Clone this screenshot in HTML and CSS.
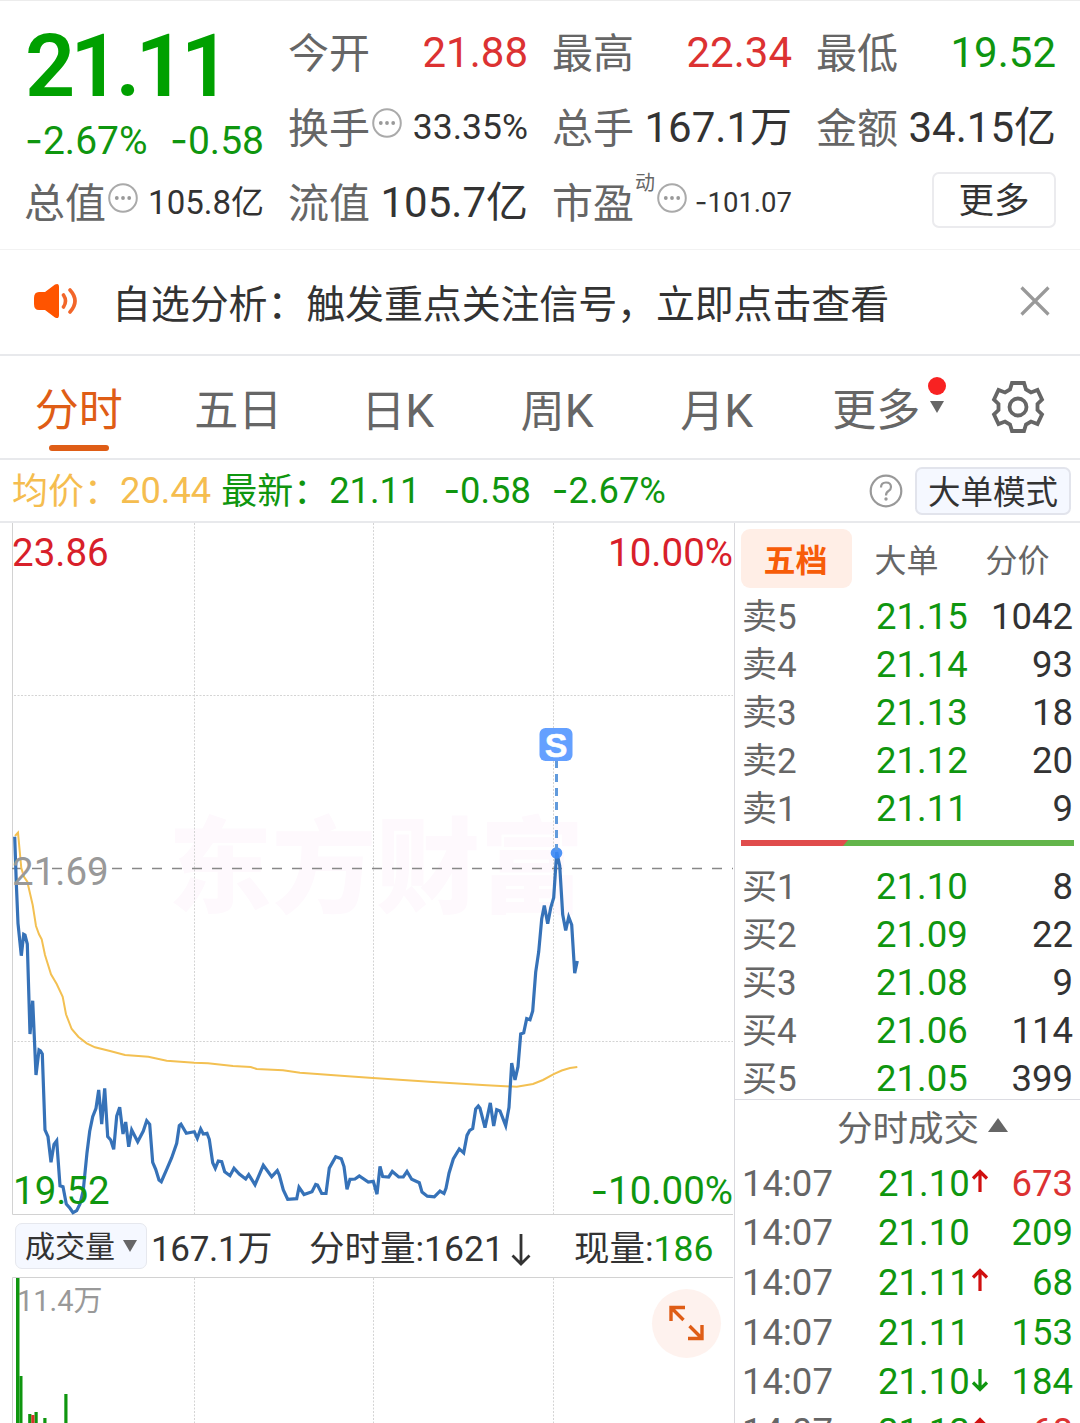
FILE: index.html
```html
<!DOCTYPE html>
<html lang="zh-CN">
  <head>
    <meta charset="UTF-8" />
    <meta name="viewport" content="width=device-width, initial-scale=1.0" />
    <title>分时</title>
    <link rel="stylesheet" href="styles.css">
  </head>

  <body>
    <svg class="defs">
      <symbol id="icon_more" viewBox="0 0 30 30">
        <circle cx="15" cy="15" r="13.8" fill="none" stroke="#aaa" stroke-width="2" />
        <circle cx="8.8" cy="15" r="1.9" fill="#999" />
        <circle cx="15" cy="15" r="1.9" fill="#999" />
        <circle cx="21.2" cy="15" r="1.9" fill="#999" />
      </symbol>
      <symbol id="icon_up" viewBox="0 0 18 24">
        <path d="M9 23V2.5M2 9.5L9 2.5L16 9.5" fill="none" stroke="currentColor" stroke-width="3.2" />
      </symbol>
      <symbol id="icon_down" viewBox="0 0 18 24">
        <path d="M9 1V21.5M2 14.5L9 21.5L16 14.5" fill="none" stroke="currentColor" stroke-width="3.2" />
      </symbol>
    </svg>

    <div class="quote">
      <div class="quote_price">
        <div class="price_now green">21.11</div>
        <div class="price_change green">
          <span><i class="minus">-</i>2.67%</span>
          <span><i class="minus">-</i>0.58</span>
        </div>
      </div>
      <div class="cell"><label>今开</label><b class="red">21.88</b></div>
      <div class="cell"><label>最高</label><b class="red">22.34</b></div>
      <div class="cell"><label>最低</label><b class="green">19.52</b></div>
      <div class="cell"><label>换手</label><svg class="more"><use href="#icon_more" /></svg><b class="mid">33.35%</b></div>
      <div class="cell"><label>总手</label><b>167.1万</b></div>
      <div class="cell"><label>金额</label><b>34.15亿</b></div>
      <div class="cell"><label>总值</label><svg class="more"><use href="#icon_more" /></svg><b class="small">105.8亿</b></div>
      <div class="cell"><label>流值</label><b>105.7亿</b></div>
      <div class="cell"><label>市盈</label><sup>动</sup><svg class="more"><use href="#icon_more" /></svg><b class="mini"><i class="minus">-</i>101.07</b></div>
      <div class="cell cell_btn"><a class="quote_more">更多</a></div>
    </div>

    <div class="notice">
      <svg class="notice_icon" viewBox="0 0 46 38">
        <path d="M7 10H13L23 2.5Q27 0.5 27 5V33Q27 37.5 23 35.5L13 28H7Q2 28 2 22V16Q2 10 7 10Z" fill="#ff5400" />
        <path d="M31.500 13Q35.500 19 31.500 25M38 8Q48 19 38 30" fill="none" stroke="#f2662a" stroke-width="3.6" stroke-linecap="round" />
      </svg>
      <span class="notice_text">自选分析：触发重点关注信号，立即点击查看</span>
      <svg class="notice_close" viewBox="0 0 30 30">
        <path d="M1.5 1.5L28.5 28.5M28.5 1.5L1.5 28.5" stroke="#999" stroke-width="3.2" />
      </svg>
    </div>

    <div class="tabs">
      <a class="tab active">分时</a>
      <a class="tab">五日</a>
      <a class="tab">日<em>K</em></a>
      <a class="tab">周<em>K</em></a>
      <a class="tab">月<em>K</em></a>
      <a class="tab tab_more">更多<i class="caret"></i><i class="dot"></i></a>
      <svg class="gear" viewBox="-27 -27 54 54" fill="none" stroke="#666" stroke-width="3.8">
        <path d="M-6 -24H6L8 -17.5L13 -14.5L19.5 -17L24 -7.5L19.5 -3V3L24 7.5L19.5 17L13 14.5L8 17.5L6 24H-6L-8 17.5L-13 14.5L-19.5 17L-24 7.5L-19.5 3V-3L-24 -7.5L-19.5 -17L-13 -14.5L-8 -17.5Z" />
        <circle r="8.5" />
      </svg>
    </div>

    <div class="info">
      <span class="info_avg cn">均价：</span>
      <span class="info_avg info_num">20.44</span>
      <span class="green cn">最新：</span>
      <span class="green info_last">21.11</span>
      <span class="green info_diff"><i class="minus">-</i>0.58</span>
      <span class="green"><i class="minus">-</i>2.67%</span>
      <svg class="help" viewBox="0 0 34 34">
        <circle cx="17" cy="17" r="15.3" fill="none" stroke="#999" stroke-width="2.2" />
        <path d="M12 13.5Q12 8.5 17 8.5T22 13Q22 15.5 19.5 17Q17 18.5 17 21.5" fill="none" stroke="#999" stroke-width="2.2" />
        <circle cx="17" cy="25" r="1.7" fill="#999" />
      </svg>
      <a class="mode_btn">大单模式</a>
    </div>

    <div class="main">
      <div class="left">
        <svg class="chart" viewBox="0 523 734 692">
          <text class="watermark" x="168" y="905">东方财富</text>
          <g class="grid_line">
            <path d="M194.5 523V1214M373.5 523V1214M553.5 523V1214" />
            <path d="M14 695.5H733M14 1041.5H733" />
          </g>
          <path class="axis" d="M12.5 523V1214.5H733" />
          <path class="base_line" d="M12 868.5H733" />
          <polyline class="avg_line" points="15,836 18,832.7 21.3,868 24,876.7 27.3,881.7 32.7,905 36,926 39,934.3 41.7,939.3 45,955 51,974.3 56.7,984 62.7,996.7 66,1014.3 71.7,1029 78.3,1036.7 86.7,1043.3 95,1047.3 110,1051 125,1055 148.3,1056.7 166.7,1060.7 194.3,1062.7 208,1063.3 233,1066 250.7,1067 256.7,1069 283,1070.3 300,1072.7 348,1076.2 373,1077.9 433,1082 486.7,1085.3 516.7,1086.7 533,1084 543,1080 553.7,1074.2 561.7,1070.5 570,1068 577.3,1067" />
          <polyline class="price_line" points="14.7,836.7 16.3,883 18,923.3 21.3,955.7 23.7,934.3 25,935 27.3,944 30,1034 32.7,1000.7 36,1075 39,1050 40.5,1051 42.3,1054 45,1130 48,1136.7 51,1162.3 54,1144.3 56.7,1140.7 60,1185.7 63,1186.7 66.3,1204 70,1208.3 73,1212.7 76.7,1210.7 80,1204 83.3,1190 87,1152.7 89.7,1131.3 92.7,1116.7 96,1108.3 98.7,1090 101.7,1124 104.7,1088.3 107.7,1136.7 110.7,1140 113.7,1149.3 116.7,1116 119.7,1107.3 123,1134 125.7,1122 128.7,1146.7 131.7,1130 137.7,1141.7 143.3,1131 146.7,1120.7 149.7,1124.3 152.7,1162.3 155.7,1169.3 159,1180 161.3,1181.7 166.7,1169.3 171.7,1157.7 176.7,1143.3 179.3,1125.7 181,1124.3 186.3,1133.3 194.3,1131.7 197.3,1138.3 200.7,1129 203.3,1134 207,1133.3 209.3,1139.3 212.7,1162.7 215.3,1168.3 218.3,1161 221.7,1161.7 224.7,1171.7 230,1175.7 234,1168.3 239.3,1174 245.7,1179 248.7,1174.7 255,1184.7 263.3,1165.3 271.7,1176.7 277.3,1170.7 279.3,1175 283.3,1190 287.7,1199.3 296.7,1198.7 299,1187.3 304,1194.5 312,1191.8 315.7,1184.4 317.5,1185 321.7,1193.5 326,1193.5 329.3,1168.1 335.7,1156.7 341.3,1158.7 344,1166.5 347,1189.4 350,1179.3 355,1179 359.3,1175.9 368.3,1182 373.3,1181.3 377,1194.2 380,1166.5 382.7,1176.6 388.7,1177 392.3,1171.5 398.7,1177 403.3,1177 407,1171.5 411.7,1179.3 419.3,1182.7 422,1192.1 427.3,1196.2 434.3,1196.9 440,1191.1 444,1193.5 446,1188.4 449,1173.2 453.3,1159 459.3,1148.9 463.7,1152.9 467,1135.4 469.7,1130.3 472.7,1128.6 475.7,1109 478.3,1106 480,1108.3 485,1127.6 490.3,1102.9 493.7,1125.9 496.7,1109.7 500,1111 505.7,1125.6 509,1107.3 511.7,1063 515,1079.9 518,1066.7 520.7,1034 523.7,1032.9 526.7,1018.7 530,1019.8 532.7,1011 535.7,972.1 538.7,951.8 541.7,919 544.3,905.5 547.7,923.8 550.7,907.9 553.7,897.7 556.7,852 559.7,865.6 562.7,914.6 565.7,930.5 568.7,917 571.7,924.8 574.7,973.1 577.3,961" />
          <circle cx="556.5" cy="853" r="5.8" fill="#3b88f5" opacity="0.9" />
          <path d="M556.5 760V850" stroke="#629bdc" stroke-width="3" stroke-dasharray="8 6" />
          <rect x="539.5" y="728" width="33" height="33" rx="6" fill="#64a0ff" />
          <text class="sell_mark" x="556" y="757">S</text>
          <text class="gray_text" x="12" y="885">21.69</text>
          <text class="green_text" x="13" y="1204">19.52</text>
          <text class="red_text" x="12" y="566">23.86</text>
          <text class="red_text" x="733" y="566" text-anchor="end">10.00%</text>
          <text class="green_text" x="733" y="1204" text-anchor="end"><tspan class="minus">-</tspan>10.00%</text>
        </svg>

        <div class="volume_bar">
          <a class="volume_btn">成交量<i class="caret"></i></a>
          <span class="volume_total">167.1万</span>
          <span class="volume_min">分时量:1621<svg class="long_arrow" viewBox="0 0 20 34"><path d="M10 1V31M1.5 22.5L10 31L18.5 22.5" fill="none" stroke="#333" stroke-width="2.8" /></svg></span>
          <span class="volume_now">现量:<em class="green">186</em></span>
        </div>

        <div class="volume">
          <svg class="volume_chart" viewBox="0 1277 734 146">
            <path class="grid_line" d="M194.5 1278V1423M373.5 1278V1423M553.5 1278V1423" />
            <path class="axis" d="M12.5 1423V1277.5H733" />
            <text class="volume_max" x="17" y="1310.5">11.4万</text>
            <g fill="#0f960f">
              <rect x="16" y="1278" width="3.5" height="145" />
              <rect x="19.5" y="1376" width="3" height="47" />
              <rect x="28.2" y="1414" width="3.2" height="9" />
              <rect x="34.5" y="1412" width="3.2" height="11" />
              <rect x="43.3" y="1418" width="3.2" height="5" />
              <rect x="64.3" y="1394" width="3.2" height="29" />
            </g>
            <rect x="31.3" y="1415" width="3.2" height="8" fill="#d8342a" />
          </svg>
          <a class="expand">
            <svg viewBox="0 0 36 36" fill="none" stroke="#df5d16" stroke-width="3.4">
              <path d="M3 16V2.5H17M3 2.5L15.5 15M20 33.500H34V20M34 33.500L21.500 21" />
            </svg>
          </a>
        </div>
      </div>

      <div class="right">
        <div class="side_tabs">
          <a class="side_tab on">五档</a>
          <a class="side_tab">大单</a>
          <a class="side_tab">分价</a>
        </div>
        <ul class="levels">
          <li><label>卖5</label><span>21.15</span><em>1042</em></li>
          <li><label>卖4</label><span>21.14</span><em>93</em></li>
          <li><label>卖3</label><span>21.13</span><em>18</em></li>
          <li><label>卖2</label><span>21.12</span><em>20</em></li>
          <li><label>卖1</label><span>21.11</span><em>9</em></li>
        </ul>
        <div class="ratio"><i></i></div>
        <ul class="levels">
          <li><label>买1</label><span>21.10</span><em>8</em></li>
          <li><label>买2</label><span>21.09</span><em>22</em></li>
          <li><label>买3</label><span>21.08</span><em>9</em></li>
          <li><label>买4</label><span>21.06</span><em>114</em></li>
          <li><label>买5</label><span>21.05</span><em>399</em></li>
        </ul>
        <div class="deal_title">分时成交<i class="caret_up"></i></div>
        <ul class="deals">
          <li><label>14:07</label><span>21.10</span><svg class="arrow up"><use href="#icon_up" /></svg><em class="red">673</em></li>
          <li><label>14:07</label><span>21.10</span><em>209</em></li>
          <li><label>14:07</label><span>21.11</span><svg class="arrow up"><use href="#icon_up" /></svg><em>68</em></li>
          <li><label>14:07</label><span>21.11</span><em>153</em></li>
          <li><label>14:07</label><span>21.10</span><svg class="arrow"><use href="#icon_down" /></svg><em>184</em></li>
          <li><label>14:07</label><span>21.12</span><svg class="arrow up"><use href="#icon_up" /></svg><em class="red">68</em></li>
        </ul>
      </div>
    </div>
  </body>
</html>
```

FILE: styles.css
```css
* {
  box-sizing: border-box;
}

body {
  margin: 0;
  width: 1080px;
  height: 1423px;
  overflow: hidden;
  background: #fff;
  color: #333;
  font-family: Roboto, "Noto Sans CJK SC", sans-serif;
  white-space: nowrap;
}

ul {
  list-style: none;
  margin: 0;
  padding: 0;
}

i,
em {
  font-style: normal;
}

svg {
  flex: none;
}

.defs {
  display: none;
}

.minus {
  font-family: Inter, sans-serif;
}

.red {
  color: #dc3232 !important;
}

.green {
  color: #0f960f;
}

/* 行情 */
.quote {
  display: grid;
  grid-template-columns: repeat(4, 239px);
  grid-template-rows: repeat(3, 75px);
  column-gap: 25px;
  height: 250px;
  padding: 14px 25px 0;
  border-top: 1px solid #ececec;
  border-bottom: 1px solid #f2f2f2;
}

.quote_price {
  grid-row: span 2;
}

.price_now {
  height: 100px;
  line-height: 102px;
  font-size: 88px;
  font-weight: 600;
  letter-spacing: -5px;
  color: #00a000;
}

.price_change {
  display: flex;
  justify-content: space-between;
  line-height: 50px;
  font-size: 39px;
}

.cell {
  display: flex;
  line-height: 75px;
}

.cell label {
  padding-top: 2px;
  margin-left: -1px;
  font-size: 41px;
  color: #666;
}

.cell b {
  margin-left: auto;
  font-size: 42px;
  font-weight: 400;
}

.cell .mid {
  font-size: 35.5px;
}

.cell .small {
  font-size: 33px;
}

.cell .mini {
  font-size: 27.5px;
}

.cell sup {
  margin-left: 1px;
  font-size: 20px;
  line-height: 36px;
  color: #666;
}

.cell .more {
  width: 30px;
  height: 30px;
  margin: 18px 0 0 2px;
}

.cell_btn {
  justify-content: flex-end;
  align-items: center;
}

.quote_more {
  width: 124px;
  height: 56px;
  margin-bottom: 6px;
  border: 2px solid #ebebee;
  border-radius: 7px;
  text-align: center;
  line-height: 54px;
  font-size: 35.5px;
}

/* 提示 */
.notice {
  display: flex;
  align-items: center;
  height: 106px;
  padding: 0 30px 3px 32px;
  border-bottom: 2px solid #e8e9ec;
}

.notice_icon {
  width: 46px;
  height: 38px;
}

.notice_text {
  margin-left: 34px;
  font-size: 39px;
  letter-spacing: -0.15px;
}

.notice_close {
  width: 30px;
  height: 30px;
  margin-left: auto;
}

/* 周期 */
.tabs {
  display: flex;
  align-items: center;
  height: 104px;
  border-bottom: 2px solid #e8e9ec;
}

.tab {
  position: relative;
  width: 159.5px;
  height: 102px;
  padding-right: 2px;
  text-align: center;
  line-height: 110px;
  font-size: 44px;
  color: #666;
}

.tab em {
  font-size: 46px;
}

.tab.active {
  color: #df5d16;
}

.tab.active::after {
  content: "";
  position: absolute;
  left: 49px;
  bottom: 7px;
  width: 60px;
  height: 6px;
  border-radius: 3px;
  background: #df5d16;
}

.caret {
  display: inline-block;
  border: 7px solid transparent;
  border-top: 12px solid #666;
  border-bottom: 0;
}

.tab_more .caret {
  position: absolute;
  left: 132px;
  top: 45px;
}

.tab_more .dot {
  position: absolute;
  left: 130px;
  top: 21px;
  width: 18px;
  height: 18px;
  border-radius: 50%;
  background: #f82222;
}

.gear {
  width: 54px;
  height: 54px;
  margin-left: 34px;
}

/* 均价 最新 */
.info {
  display: flex;
  align-items: center;
  height: 63px;
  padding: 0 9px 0 12px;
  border-bottom: 2px solid #e8e9ec;
  font-size: 36.3px;
  line-height: 63px;
}

.info .cn {
  padding-top: 4px;
  font-size: 36px;
}

.info_avg {
  color: #f5bd4f;
}

.info_num {
  margin-right: 10px;
}

.info_last {
  margin-right: 23px;
}

.info_diff {
  margin-right: 21px;
}

.help {
  width: 34px;
  height: 34px;
  margin-left: auto;
}

.mode_btn {
  width: 156px;
  height: 48px;
  margin-left: 12px;
  border: 2px solid #e2e4ec;
  border-radius: 7px;
  background: #f5f8ff;
  text-align: center;
  line-height: 49px;
  font-size: 32.5px;
}

.main {
  display: flex;
  height: 900px;
}

.left {
  width: 735px;
  border-right: 1px solid #d9d9dd;
}

.chart {
  display: block;
  width: 734px;
  height: 692px;
  font-size: 38.5px;
}

.axis {
  fill: none;
  stroke: #d2d2d2;
}

.grid_line {
  fill: none;
  stroke: #d4d4d4;
  stroke-dasharray: 2 1.5;
}

.base_line {
  stroke: #888;
  stroke-width: 1.6;
  stroke-dasharray: 10 10;
}

.avg_line {
  fill: none;
  stroke: #f3c052;
  stroke-width: 2;
}

.price_line {
  fill: none;
  stroke: #3672b8;
  stroke-width: 3.2;
}

.watermark {
  font-size: 104px;
  font-weight: 900;
  fill: #fef9fd;
}

.gray_text {
  fill: #999;
}

.green_text {
  fill: #0f960f;
}

.red_text {
  fill: #d8202a;
}

.sell_mark {
  fill: #fff;
  stroke: #fff;
  stroke-width: 0.5;
  font: 700 34px "Liberation Sans", sans-serif;
  text-anchor: middle;
}

.volume_bar {
  display: flex;
  align-items: center;
  height: 62px;
  padding: 0 0 2px 15px;
  font-size: 35.5px;
}

.volume_btn {
  width: 132px;
  height: 46px;
  margin-top: 2px;
  padding-left: 9px;
  border: 1px solid #e6e8ee;
  border-radius: 7px;
  background: #f5f8ff;
  line-height: 46px;
  font-size: 30px;
}

.volume_btn .caret {
  margin: 0 0 5px 8px;
}

.volume_total {
  width: 158px;
  padding-left: 4px;
  font-size: 35px;
  letter-spacing: -0.3px;
}

.volume_min {
  width: 269px;
  padding-left: 4px;
}

.long_arrow {
  width: 20px;
  height: 34px;
  margin-left: 7px;
  vertical-align: -6px;
}

.volume {
  position: relative;
}

.volume_chart {
  display: block;
  width: 734px;
  height: 146px;
}

.volume_max {
  font-size: 29px;
  fill: #999;
}

.expand {
  position: absolute;
  left: 652px;
  top: 12px;
  width: 69px;
  height: 69px;
  padding: 16px 16px;
  border-radius: 50%;
  background: #fef2ee;
}

.expand svg {
  width: 36px;
  height: 36px;
}

/* 五档 */
.right {
  width: 345px;
}

.side_tabs {
  display: flex;
  height: 69px;
  padding: 6px 0 0 6px;
}

.side_tab {
  width: 111px;
  height: 59px;
  padding-right: 2px;
  border-radius: 9px;
  text-align: center;
  line-height: 65px;
  font-size: 32px;
  color: #666;
}

.side_tab.on {
  background: #ffeee6;
  color: #f75c08;
  font-weight: 700;
}

.levels li,
.deals li {
  display: flex;
  align-items: center;
  height: 48px;
  padding: 1px 7px 0 7px;
  line-height: 48px;
  font-size: 36.5px;
}

.levels label,
.deals label {
  width: 134px;
  color: #666;
}

.levels label {
  padding-top: 2px;
  font-size: 35px;
}

.levels span,
.deals span {
  color: #0f960f;
}

.levels em,
.deals em {
  margin-left: auto;
}

.deals em {
  color: #0f960f;
}

.ratio {
  height: 6px;
  margin: 8px 6px 16px;
  background: #63b54b;
}

.ratio i {
  display: block;
  width: 107px;
  height: 6px;
  background: #e04c4c;
  clip-path: polygon(0 0, 100% 0, 102px 100%, 0 100%);
}

.deal_title {
  display: flex;
  align-items: center;
  justify-content: center;
  height: 59px;
  margin-top: -3px;
  border-top: 1px solid #dcdce2;
  line-height: 62px;
  font-size: 35.5px;
  color: #666;
}

.caret_up {
  margin: 0 -30px 8px 9px;
  border: 10.5px solid transparent;
  border-top: 0;
  border-bottom: 14px solid #666;
}

.deals li {
  height: 49.7px;
  line-height: 49.7px;
}

.deals label {
  width: 136px;
}

.arrow {
  width: 18px;
  height: 24px;
  margin: 0 0 5px 1px;
  color: #0f960f;
}

.arrow.up {
  color: #d01010;
}
```
